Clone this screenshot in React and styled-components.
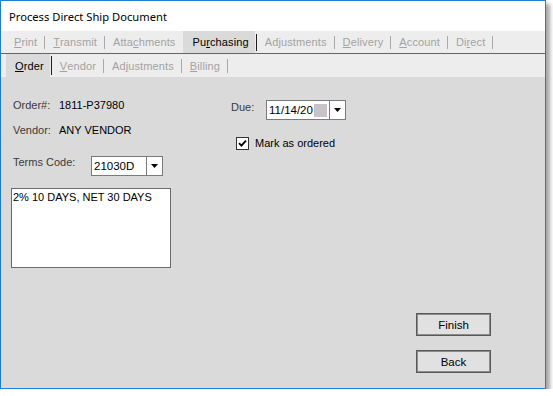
import React from "react";
import styled, { createGlobalStyle } from "styled-components";

const Global = createGlobalStyle`
  html, body { margin: 0; padding: 0; background: #ffffff; }
  body { font-family: "Liberation Sans", Arial, sans-serif; font-size: 11px; }
`;

const Window = styled.div`
  width: 546px;
  height: 389px;
  box-sizing: border-box;
  border: 1px solid #1a7fd4;
  background: #dadada;
  display: flex;
  flex-direction: column;
  box-shadow: 4px 4px 4px rgba(0, 0, 0, 0.35);
`;

const TitleBar = styled.div`
  height: 30px;
  flex: none;
  background: #ffffff;
  display: flex;
  align-items: center;
  padding-left: 8px;
  font-family: "Segoe UI", "Noto Sans", sans-serif;
  font-size: 11.2px;
  color: #000;
`;

const TabBar = styled.div`
  height: ${(p) => p.$h}px;
  flex: none;
  background: #ededed;
  display: flex;
  align-items: stretch;
  padding-left: 5px;
  border-bottom: ${(p) => (p.$line ? "1px solid #646464" : "none")};
`;

const Tab = styled.div`
  display: flex;
  align-items: center;
  padding: 0 ${(p) => (p.$active ? 6 : 7)}px 0 ${(p) => (p.$active ? 9 : 8)}px;
  background: ${(p) => (p.$active ? "#dadada" : "transparent")};
  color: ${(p) => (p.$active ? "#000" : "#a3a3a3")};
  font-size: 11px;
  letter-spacing: 0.12px;
  white-space: nowrap;
`;

const Key = styled.span`
  text-decoration: underline;
  text-underline-offset: 1px;
`;

const Sep = styled.div`
  width: 1px;
  flex: none;
  align-self: center;
  height: ${(p) => p.$h}px;
  background: ${(p) =>
    p.$hidden ? "transparent" : p.$dark ? "#1e1e1e" : "#a9a9a9"};
  margin-left: ${(p) => (p.$dark ? 1 : 0)}px;
`;

const Content = styled.div`
  flex: 1;
  display: flex;
  align-items: stretch;
  padding-left: 10px;
  color: #000;
`;

const LeftCol = styled.div`
  width: 161px;
  padding-top: 22px;
  display: flex;
  flex-direction: column;
`;

const Row = styled.div`
  display: flex;
  align-items: flex-start;
  margin-top: ${(p) => p.$mt || 0}px;
  line-height: 13px;
`;

const Label = styled.div`
  width: ${(p) => p.$w}px;
  padding-left: 2px;
  box-sizing: border-box;
  color: #3a3a3a;
  flex: none;
  margin-top: ${(p) => p.$mt || 0}px;
`;

const Value = styled.div`
  color: #000;
`;

const Combo = styled.div`
  width: ${(p) => p.$w}px;
  height: 20px;
  box-sizing: border-box;
  border: 1px solid #7a7a7a;
  background: #fff;
  display: flex;
  flex: none;
`;

const ComboText = styled.div`
  flex: 1;
  display: flex;
  align-items: center;
  padding-left: 2px;
  font-size: 11.5px;
  color: #000;
  border-right: 1px solid #7a7a7a;
`;

const Highlight = styled.span`
  display: inline-block;
  width: 13px;
  height: 13px;
  background: #c8c3c8;
  margin-left: 1px;
`;

const ComboButton = styled.div`
  width: 15px;
  flex: none;
  display: flex;
  align-items: center;
  justify-content: center;
  background: #ffffff;
`;

const TextBox = styled.div`
  margin-top: 12px;
  width: 160px;
  height: 80px;
  box-sizing: border-box;
  border: 1px solid #6a6a6a;
  background: #fff;
  padding: 2px 1px;
  line-height: 13px;
  color: #000;
`;

const RightCol = styled.div`
  margin-left: 57px;
  padding-top: 23px;
  display: flex;
  flex-direction: column;
`;

const CheckRow = styled.label`
  display: flex;
  align-items: center;
  margin-top: 17px;
  margin-left: 7px;
  gap: 6px;
  line-height: 13px;
  color: #000;
`;

const CheckBox = styled.span`
  width: 13px;
  height: 13px;
  box-sizing: border-box;
  border: 1px solid #333;
  background: #fff;
  display: flex;
  align-items: center;
  justify-content: center;
`;

const ButtonCol = styled.div`
  margin-left: auto;
  margin-right: 54px;
  margin-bottom: 15px;
  align-self: flex-end;
  display: flex;
  flex-direction: column;
  gap: 14px;
`;

const Button = styled.button`
  width: 75px;
  height: 23px;
  box-sizing: border-box;
  border: 1px solid #595959;
  box-shadow: inset 0 0 0 1px #8c8c8c;
  background: #e1e1e1;
  font-family: "Liberation Sans", Arial, sans-serif;
  font-size: 11.5px;
  color: #000;
  padding: 0;
`;

const Arrow = () => (
  <svg width="7" height="4" viewBox="0 0 7 4">
    <path d="M0 0 H7 L3.5 4 Z" fill="#000" />
  </svg>
);

const tabs1 = [
  ["", "P", "rint"],
  ["", "T", "ransmit"],
  ["Atta", "c", "hments"],
  ["Pu", "r", "chasing"],
  ["Ad", "j", "ustments"],
  ["", "D", "elivery"],
  ["", "A", "ccount"],
  ["Di", "r", "ect"],
];
const tabs2 = [
  ["", "O", "rder"],
  ["", "V", "endor"],
  ["Ad", "j", "ustments"],
  ["", "B", "illing"],
];

function TabStrip({ items, active, h, line, sepH, darkH }) {
  return (
    <TabBar $h={h} $line={line}>
      {items.map(([a, k, b], i) => (
        <React.Fragment key={i}>
          <Tab $active={i === active}>
            {a}
            <Key>{k}</Key>
            {b}
          </Tab>
          <Sep
            $hidden={i + 1 === active}
            $dark={i === active}
            $h={i === active ? darkH : sepH}
          />
        </React.Fragment>
      ))}
    </TabBar>
  );
}

export default function App() {
  return (
    <>
      <Global />
      <Window>
        <TitleBar>Process Direct Ship Document</TitleBar>
        <TabStrip items={tabs1} active={3} h={22} line sepH={13} darkH={17} />
        <TabStrip items={tabs2} active={0} h={23} sepH={14} darkH={19} />
        <Content>
          <LeftCol>
            <Row>
              <Label $w={48}>Order#:</Label>
              <Value>1811-P37980</Value>
            </Row>
            <Row $mt={12}>
              <Label $w={48}>Vendor:</Label>
              <Value>ANY VENDOR</Value>
            </Row>
            <Row $mt={19}>
              <Label $w={80}>Terms Code:</Label>
              <Combo $w={72}>
                <ComboText>21030D</ComboText>
                <ComboButton>
                  <Arrow />
                </ComboButton>
              </Combo>
            </Row>
            <TextBox>2% 10 DAYS, NET 30 DAYS</TextBox>
          </LeftCol>
          <RightCol>
            <Row>
              <Label $w={37} $mt={1}>Due:</Label>
              <Combo $w={80}>
                <ComboText>
                  11/14/20
                  <Highlight />
                </ComboText>
                <ComboButton>
                  <Arrow />
                </ComboButton>
              </Combo>
            </Row>
            <CheckRow>
              <CheckBox>
                <svg width="9" height="9" viewBox="0 0 9 9">
                  <path d="M1 4.2 L3.4 6.6 L8 1.6" stroke="#000" strokeWidth="1.8" fill="none" />
                </svg>
              </CheckBox>
              Mark as ordered
            </CheckRow>
          </RightCol>
          <ButtonCol>
            <Button>Finish</Button>
            <Button>Back</Button>
          </ButtonCol>
        </Content>
      </Window>
    </>
  );
}
